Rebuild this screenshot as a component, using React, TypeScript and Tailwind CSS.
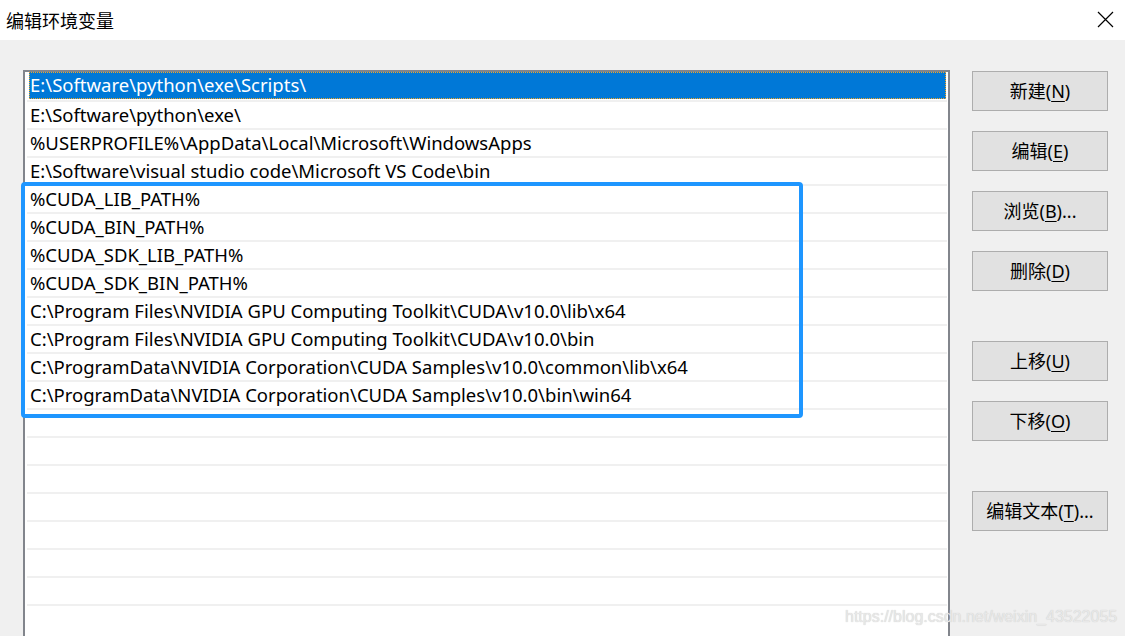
import React from "react";

const rows = [
  "E:\\Software\\python\\exe\\Scripts\\",
  "E:\\Software\\python\\exe\\",
  "%USERPROFILE%\\AppData\\Local\\Microsoft\\WindowsApps",
  "E:\\Software\\visual studio code\\Microsoft VS Code\\bin",
  "%CUDA_LIB_PATH%",
  "%CUDA_BIN_PATH%",
  "%CUDA_SDK_LIB_PATH%",
  "%CUDA_SDK_BIN_PATH%",
  "C:\\Program Files\\NVIDIA GPU Computing Toolkit\\CUDA\\v10.0\\lib\\x64",
  "C:\\Program Files\\NVIDIA GPU Computing Toolkit\\CUDA\\v10.0\\bin",
  "C:\\ProgramData\\NVIDIA Corporation\\CUDA Samples\\v10.0\\common\\lib\\x64",
  "C:\\ProgramData\\NVIDIA Corporation\\CUDA Samples\\v10.0\\bin\\win64",
  "", "", "", "", "", "", "", "",
];

function Btn({ label, u, tail, mt }: { label: string; u: string; tail?: string; mt: string }) {
  return (
    <div
      className={`${mt} w-[136px] h-[40px] bg-[#e1e1e1] border border-[#adadad] flex items-center justify-center text-[18px] text-black`}
    >
      <span>
        {label}(<span className="underline underline-offset-[3px] decoration-1">{u}</span>){tail ?? ""}
      </span>
    </div>
  );
}

export default function App() {
  return (
    <div
      className="relative w-[1125px] h-[636px] overflow-hidden bg-[#f0f0f0] flex flex-col"
      style={{ fontFamily: '"Noto Sans", "Noto Sans CJK SC", sans-serif' }}
    >
      <div className="h-[40px] bg-white flex items-center justify-between shrink-0">
        <span className="pl-[6px] text-[18px] text-black" style={{ fontFamily: '"Noto Sans CJK SC", sans-serif' }}>
          编辑环境变量
        </span>
        <svg width="17" height="17" viewBox="0 0 17 17" className="mr-[11px] mt-[-1px]">
          <path d="M1 1 L16 16 M16 1 L1 16" stroke="#000" strokeWidth="1.2" fill="none" />
        </svg>
      </div>
      <div className="flex flex-1 pt-[30px]">
        <div className="relative ml-[23px] w-[927px] border-l-2 border-t-2 border-r-2 border-[#82858c] bg-white pl-[2px] pr-[1px] flex flex-col">
          {rows.map((r, i) =>
            i === 0 ? (
              <div
                key={i}
                className="h-[28px] shrink-0 flex items-center pl-[2px] pr-[1px] pb-[1px]"
              >
                <div className="w-full h-[27px] bg-[#0078d7] border border-dotted border-[#f5a623] flex items-center pl-0 text-white text-[18.5px] whitespace-pre leading-none">
                  {r}
                </div>
              </div>
            ) : (
              <div
                key={i}
                className="h-[28px] shrink-0 border-t-2 border-[#f0f0f0] flex items-center pl-[3px] text-[18.5px] text-black whitespace-pre leading-none"
              >
                {r}
              </div>
            )
          )}
          <div className="absolute left-[-4px] top-[110px] w-[782px] h-[236px] border-[4px] border-[#1e96ff] rounded-[4px] pointer-events-none" />
        </div>
        <div className="ml-[22px] flex flex-col">
          <Btn label="新建" u="N" mt="mt-[1px]" />
          <Btn label="编辑" u="E" mt="mt-[20px]" />
          <Btn label="浏览" u="B" tail="..." mt="mt-[20px]" />
          <Btn label="删除" u="D" mt="mt-[20px]" />
          <Btn label="上移" u="U" mt="mt-[50px]" />
          <Btn label="下移" u="O" mt="mt-[20px]" />
          <Btn label="编辑文本" u="T" tail="..." mt="mt-[50px]" />
        </div>
      </div>
      <div
        className="absolute left-[845px] top-[605px] text-[16px] text-[#e8e8e8] pointer-events-none"
        style={{ fontFamily: '"Liberation Sans", sans-serif', textShadow: "0 0 1px #c4c4c4" }}
      >
        https://blog.csdn.net/weixin_43522055
      </div>
    </div>
  );
}
